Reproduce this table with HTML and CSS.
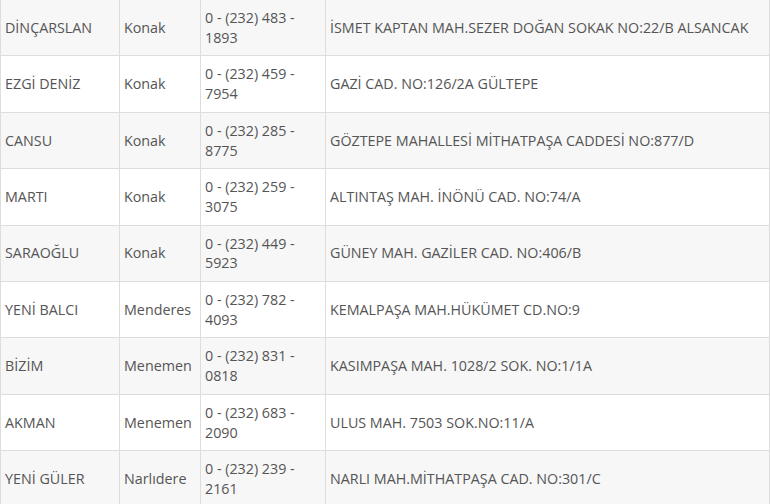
FILE: index.html
```html
<!DOCTYPE html>
<html lang="tr">
<head>
<meta charset="utf-8">
<link rel="stylesheet" href="styles.css">
</head>
<body>
<table class="list">
  <colgroup>
    <col class="c-name"><col class="c-dist"><col class="c-phone"><col class="c-addr">
  </colgroup>
  <tbody>
    <tr><td>DİNÇARSLAN</td><td>Konak</td><td>0 - (232) 483 - 1893</td><td>İSMET KAPTAN MAH.SEZER DOĞAN SOKAK NO:22/B ALSANCAK</td></tr>
    <tr><td>EZGİ DENİZ</td><td>Konak</td><td>0 - (232) 459 - 7954</td><td>GAZİ CAD. NO:126/2A GÜLTEPE</td></tr>
    <tr><td>CANSU</td><td>Konak</td><td>0 - (232) 285 - 8775</td><td>GÖZTEPE MAHALLESİ MİTHATPAŞA CADDESİ NO:877/D</td></tr>
    <tr><td>MARTI</td><td>Konak</td><td>0 - (232) 259 - 3075</td><td>ALTINTAŞ MAH. İNÖNÜ CAD. NO:74/A</td></tr>
    <tr><td>SARAOĞLU</td><td>Konak</td><td>0 - (232) 449 - 5923</td><td>GÜNEY MAH. GAZİLER CAD. NO:406/B</td></tr>
    <tr><td>YENİ BALCI</td><td>Menderes</td><td>0 - (232) 782 - 4093</td><td>KEMALPAŞA MAH.HÜKÜMET CD.NO:9</td></tr>
    <tr><td>BİZİM</td><td>Menemen</td><td>0 - (232) 831 - 0818</td><td>KASIMPAŞA MAH. 1028/2 SOK. NO:1/1A</td></tr>
    <tr><td>AKMAN</td><td>Menemen</td><td>0 - (232) 683 - 2090</td><td>ULUS MAH. 7503 SOK.NO:11/A</td></tr>
    <tr><td>YENİ GÜLER</td><td>Narlıdere</td><td>0 - (232) 239 - 2161</td><td>NARLI MAH.MİTHATPAŞA CAD. NO:301/C</td></tr>
  </tbody>
</table>
</body>
</html>
```

FILE: styles.css
```css
html, body {
  margin: 0;
  padding: 0;
  background: #ffffff;
}
.list {
  margin: 0;
  width: 769px;
  table-layout: fixed;
  border-collapse: collapse;
  font-family: "Open Sans", "Noto Sans", sans-serif;
  font-size: 14.3px;
  line-height: 19.7px;
  color: #555555;
}
.c-name { width: 119px; }
.c-dist { width: 81px; }
.c-phone { width: 125px; }
.c-addr { width: 444px; }
.list td {
  border: 1px solid #dddddd;
  padding: 8px 4px;
  vertical-align: middle;
  text-align: left;
}
.list tr:first-child td {
  border-top: none;
}
.list tr:nth-child(odd) td {
  background: #f7f7f7;
}
```
